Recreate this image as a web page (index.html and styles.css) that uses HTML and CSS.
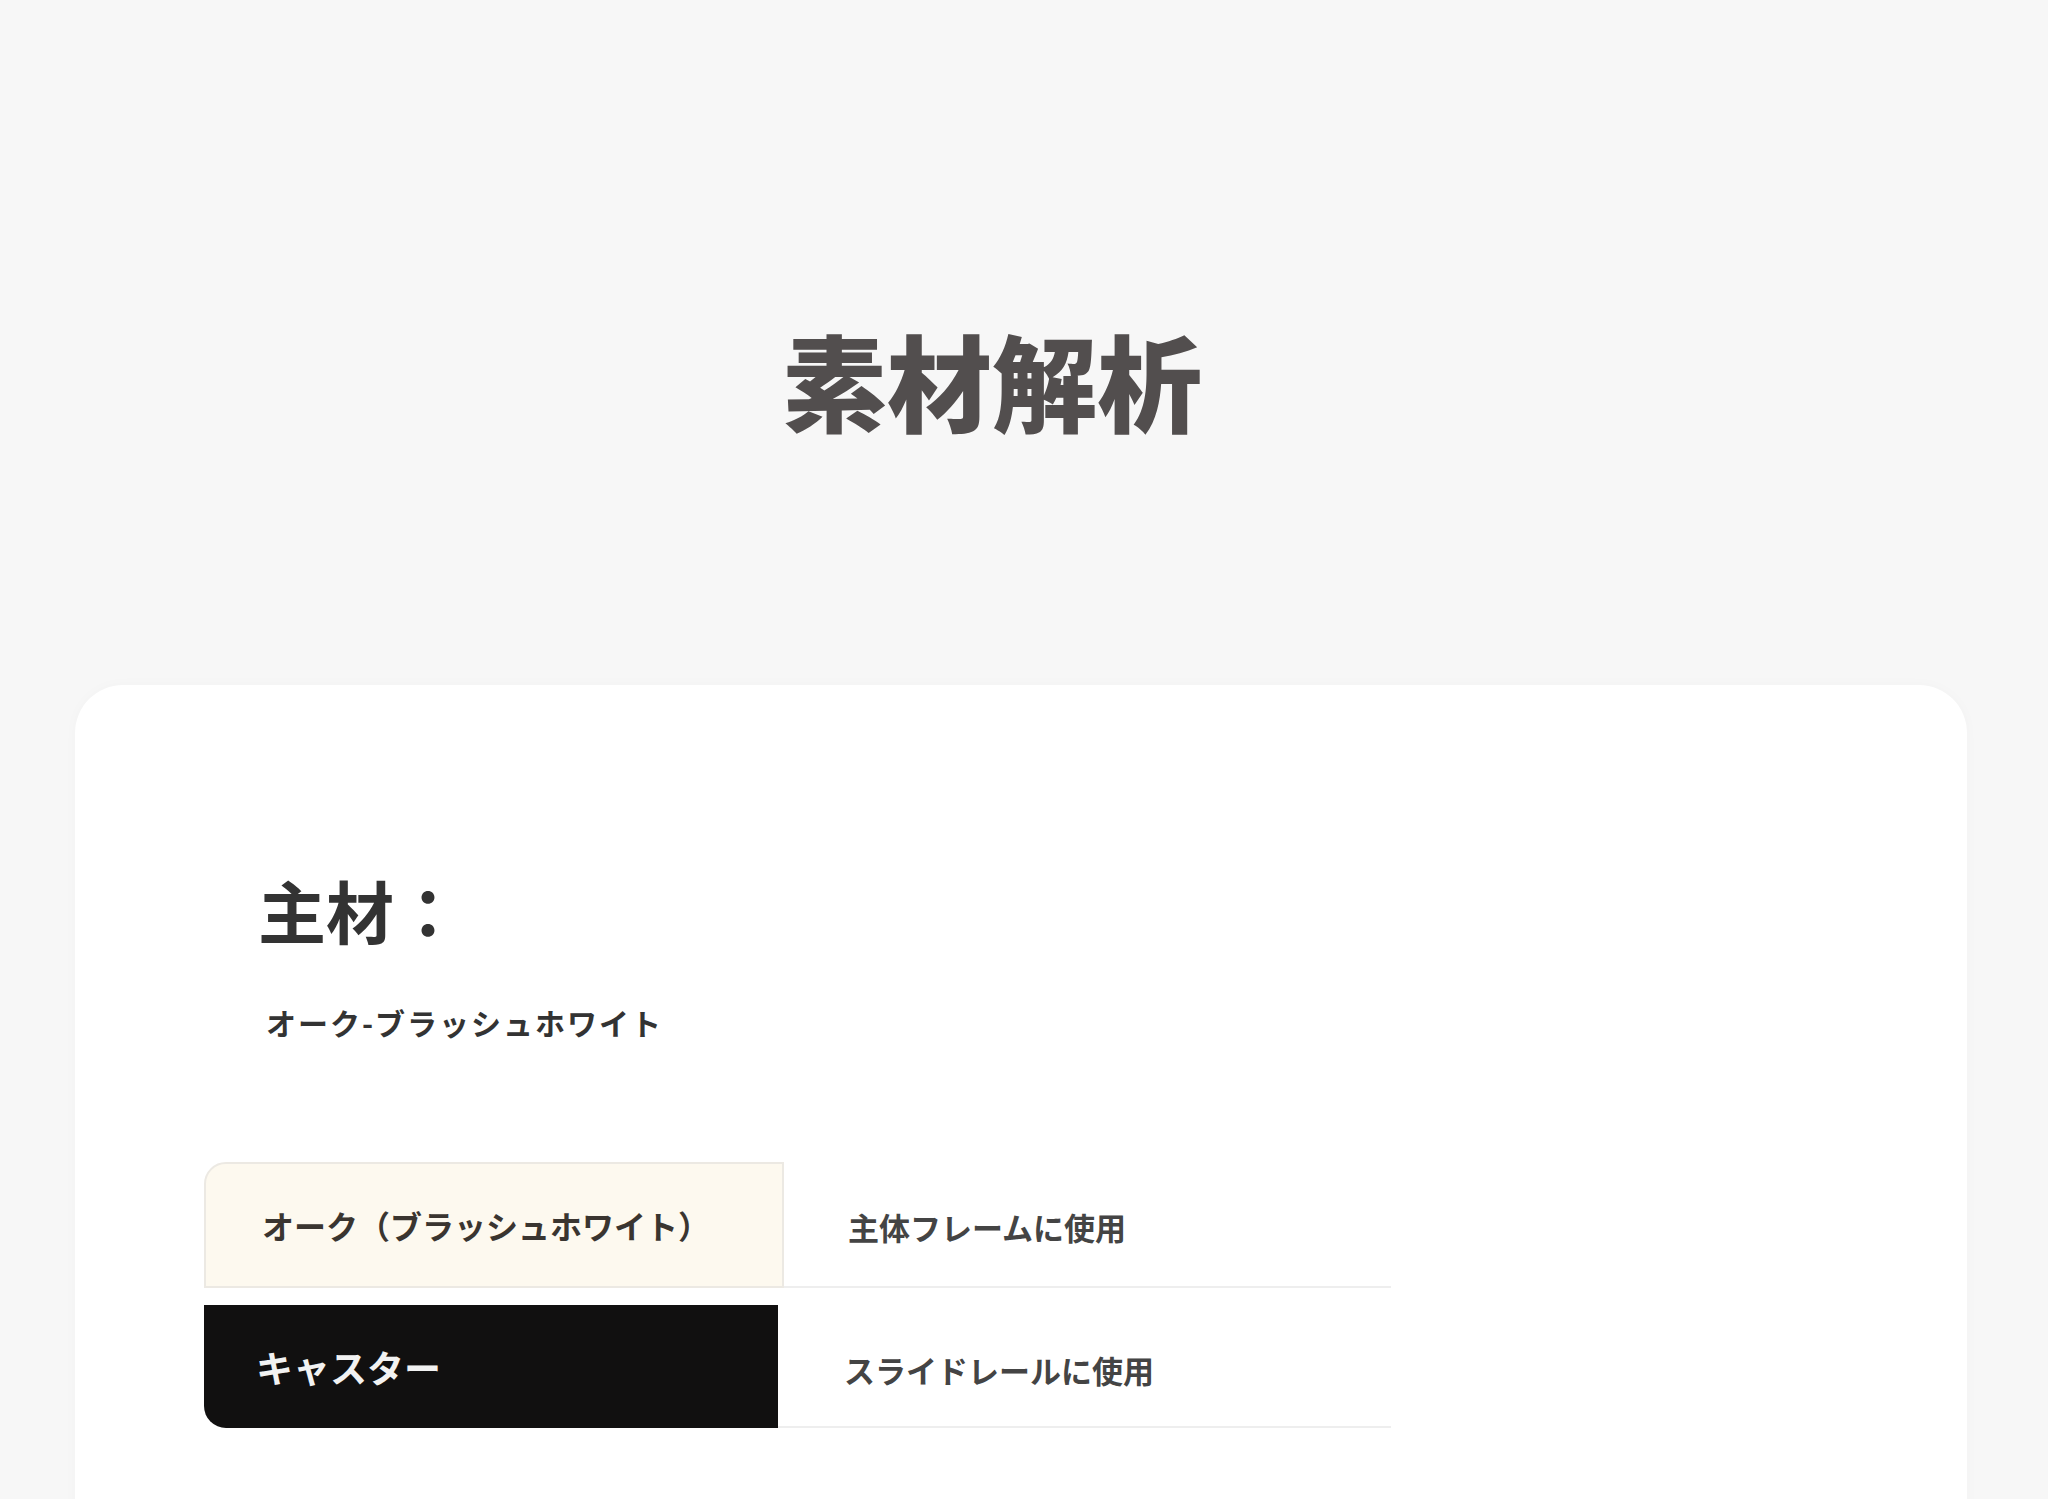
FILE: index.html
```html
<!DOCTYPE html>
<html lang="ja">
<head>
    <meta charset="UTF-8">
    <meta name="viewport" content="width=device-width, initial-scale=1.0">
    <title>素材解析</title>
    <link rel="stylesheet" href="styles.css">
</head>

<body>
<h1 class="page-title">素材解析</h1>

<div class="card">
    <h2 class="section-title">主材：</h2>
    <p class="section-sub">オーク-ブラッシュホワイト</p>

    <div class="spec-table">
        <div class="spec-row oak">
            <div class="spec-name">オーク（ブラッシュホワイト）</div>
            <div class="spec-use">主体フレームに使用</div>
        </div>
        <div class="spec-row caster">
            <div class="spec-name">キャスター</div>
            <div class="spec-use">スライドレールに使用</div>
        </div>
    </div>
</div>
</body>
</html>
```

FILE: styles.css
```css
* {
    margin: 0;
    padding: 0;
    box-sizing: border-box;
}

body {
    font-family: "Noto Sans CJK JP", "Noto Sans", sans-serif;
    background-color: #f7f7f7;
    color: #333;
    overflow: hidden;
}

.page-title {
    padding: 326px 64px 0 0;
    font-size: 105px;
    line-height: 1;
    font-weight: 900;
    color: #524e4e;
    text-align: center;
}

.card {
    margin: 254px 81px 0 75px;
    min-height: 900px;
    padding: 191px 0 0 129px;
    background-color: #fff;
    border-radius: 48px 48px 0 0;
    box-shadow: 0 0 14px rgba(0, 0, 0, 0.025);
}

.section-title {
    padding-left: 54px;
    font-size: 68px;
    line-height: 1;
    font-weight: 700;
    color: #333;
}

.section-sub {
    margin-top: 63px;
    padding-left: 62px;
    font-size: 30px;
    line-height: 1;
    font-weight: 700;
    letter-spacing: 2px;
    color: #333;
}

.spec-table {
    width: 1187px;
    margin-top: 125px;
    display: flex;
    flex-direction: column;
    gap: 17px;
}

.spec-row {
    display: flex;
    height: 126px;
}

.spec-name {
    width: 580px;
    display: flex;
    align-items: center;
    padding-left: 56px;
    font-size: 32px;
    font-weight: 700;
}

.spec-use {
    flex: 1;
    display: flex;
    align-items: center;
    padding: 4px 0 0 64px;
    font-size: 31px;
    font-weight: 700;
    color: #444;
    border-bottom: 2px solid #eeeeee;
}

.oak .spec-name {
    background-color: #fdf9ef;
    border: 2px solid #ece9e3;
    border-top-left-radius: 22px;
    color: #3a3530;
}

.caster {
    height: 123px;
}

.caster .spec-name {
    width: 574px;
    padding-left: 52px;
    background-color: #111010;
    border-bottom-left-radius: 22px;
    font-size: 37px;
    color: #f2f2f2;
}

.caster .spec-use {
    padding-left: 66px;
    padding-top: 8px;
}
```
